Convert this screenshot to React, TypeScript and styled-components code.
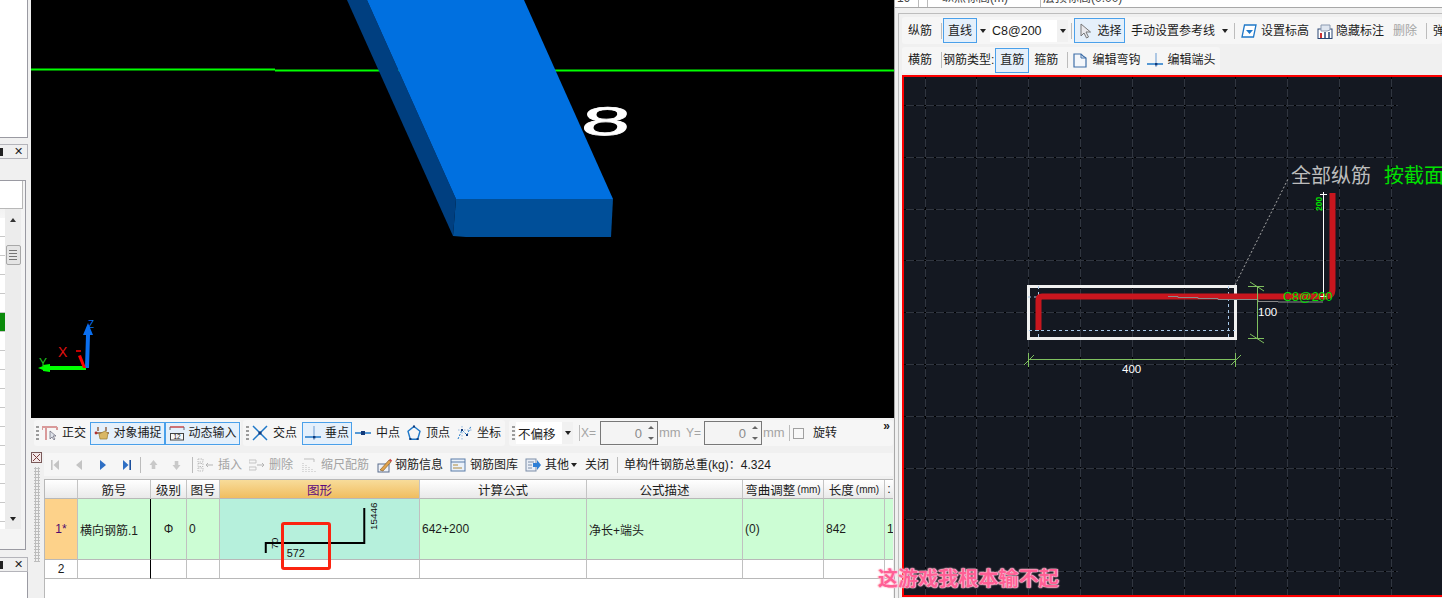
import React from 'react';
import styled, { createGlobalStyle } from 'styled-components';

const GlobalStyle = createGlobalStyle`
  html, body { margin: 0; padding: 0; background: #f0f0f0; }
  * { box-sizing: border-box; }
  body { font: 12px "Liberation Sans", "Noto Sans CJK SC", sans-serif; color: #1c1c1c; }
`;

const Ic = ({ w = 16, children }: { w?: number; children: React.ReactNode }) => (
  <svg width={w} height={16} viewBox={`0 0 ${w} 16`} style={{ flex: 'none', display: 'block' }}>
    {children}
  </svg>
);

const OrthoIcon = () => (
  <Ic>
    <path d="M0 2h15M4 2v13M0 2v3M15 2v3" stroke="#d99a9a" strokeWidth="2" fill="none" />
    <path d="M8 6l0 8 2-2 2 3 1-1-2-3 3 0z" fill="#dfe3ea" stroke="#667" strokeWidth=".7" />
  </Ic>
);
const SnapIcon = () => (
  <Ic>
    <path d="M1 8h14M4 2v4M12 2v4" stroke="#8c5a3c" strokeWidth="1.4" />
    <path d="M5 9l6-3 3 2-1 6H6z" fill="#d9b765" stroke="#9a7b30" strokeWidth=".7" />
    <circle cx="2" cy="8" r="1.4" fill="#b03030" />
  </Ic>
);
const DynIcon = () => (
  <Ic>
    <path d="M1 2h14" stroke="#c43a3a" strokeWidth="1.4" />
    <path d="M1 2v3M15 2v3" stroke="#667" />
    <rect x="1.5" y="8.5" width="13" height="6.5" fill="#f8f8f8" stroke="#444" />
    <text x="8" y="14.3" fontSize="6.5" textAnchor="middle" fontFamily="Liberation Sans" fill="#222">12</text>
  </Ic>
);
const CrossIcon = () => (
  <Ic>
    <path d="M1 1l14 14M15 1L1 15" stroke="#1f78c8" strokeWidth="1.5" />
    <rect x="6.5" y="6.5" width="3" height="3" fill="#123a7a" />
  </Ic>
);
const PerpIcon = ({ w = 16 }: { w?: number }) => (
  <Ic w={w}>
    <path d={`M0 12h${w}`} stroke="#1f78c8" strokeWidth="1.5" />
    <path d={`M${w / 2 + 1} 1v14`} stroke="#7fa9d8" strokeWidth="1.2" />
    <rect x={w / 2} y="11" width="2.4" height="2.4" fill="#123a7a" />
  </Ic>
);
const MidIcon = () => (
  <Ic>
    <path d="M0 8h16" stroke="#1f78c8" strokeWidth="1.5" />
    <rect x="6" y="6" width="4" height="4" fill="#123a7a" />
  </Ic>
);
const VertexIcon = () => (
  <Ic w={14}>
    <path d="M7 1.5l6 4.8-2.3 8H3.3L1 6.3z" fill="none" stroke="#1f78c8" strokeWidth="1.4" />
    <rect x="6" y="0.5" width="2" height="2" fill="#123a7a" />
    <rect x="2.4" y="13" width="2" height="2" fill="#123a7a" />
    <rect x="9.6" y="13" width="2" height="2" fill="#123a7a" />
  </Ic>
);
const CoordIcon = () => (
  <Ic>
    <path d="M1 14l4-9 5 5 4-9" fill="none" stroke="#1f78c8" strokeDasharray="2 1.4" />
    <path d="M1 5h14M5 1v14" stroke="#7fa9d8" strokeDasharray="1.5 1.5" strokeWidth=".8" />
    <rect x="4" y="4" width="2" height="2" fill="#123a7a" />
    <rect x="9" y="9" width="2" height="2" fill="#123a7a" />
  </Ic>
);
const FirstIcon = ({ c }: { c: string }) => (
  <Ic w={10}>
    <path d="M1 3h1.6v10H1z" fill={c} />
    <path d="M9 3v10L3.5 8z" fill={c} />
  </Ic>
);
const PrevIcon = ({ c }: { c: string }) => (
  <Ic w={8}>
    <path d="M7 3v10L1 8z" fill={c} />
  </Ic>
);
const NextIcon = ({ c }: { c: string }) => (
  <Ic w={8}>
    <path d="M1 3v10l6-5z" fill={c} />
  </Ic>
);
const LastIcon = ({ c }: { c: string }) => (
  <Ic w={10}>
    <path d="M1 3v10l5.5-5z" fill={c} />
    <path d="M7.4 3H9v10H7.4z" fill="#1b4f9c" />
  </Ic>
);
const UpIcon = () => (
  <Ic w={9}>
    <path d="M4.5 3L8.5 8H6.3v4H2.7V8H.5z" fill="#c9c9c9" />
  </Ic>
);
const DownIcon = () => (
  <Ic w={9}>
    <path d="M4.5 13L8.5 8H6.3V4H2.7v4H.5z" fill="#c9c9c9" />
  </Ic>
);
const InsertIcon = () => (
  <Ic>
    <path d="M1 2h5v3H1zM1 6.500h5v3H1zM1 11h5v3H1z" fill="none" stroke="#bdbdbd" strokeDasharray="1.5 1" />
    <path d="M16 8H9M11 6L9 8l2 2" fill="none" stroke="#b5b5b5" />
  </Ic>
);
const RemoveIcon = () => (
  <Ic>
    <path d="M0 3h7v3H0zM0 10h7v3H0z" fill="none" stroke="#c5c5c5" />
    <path d="M8 8h7M13 6l2 2-2 2" fill="none" stroke="#b5b5b5" />
  </Ic>
);
const ScaleIcon = () => (
  <Ic w={14}>
    <path d="M1 15V5M4 15V7M7 15V9M10 15v-4M13 15v-2" stroke="#bdbdbd" strokeDasharray="1 1" />
    <path d="M2 2h10v3" fill="none" stroke="#bdbdbd" />
  </Ic>
);
const InfoIcon = () => (
  <Ic>
    <rect x="1" y="7" width="11" height="8" fill="#eef2f8" stroke="#5a6d8c" />
    <path d="M3 13L12 3l2 2-8 9z" fill="#e0a24c" stroke="#7a5520" strokeWidth=".6" />
    <path d="M12 3l1.200-1.200 2 2L14 5z" fill="#c44" />
  </Ic>
);
const LibIcon = () => (
  <Ic>
    <rect x="1" y="2" width="14" height="12" fill="#eaf1fa" stroke="#5a7ca8" />
    <path d="M1 5h14" stroke="#5a7ca8" />
    <path d="M3 8h5M3 11h9" stroke="#b08a3c" />
  </Ic>
);
const OtherIcon = () => (
  <Ic>
    <rect x="1" y="2" width="10" height="12" fill="#e9eef6" stroke="#7d8ea8" />
    <path d="M3 5h6M3 8h4M3 11h4" stroke="#7d8ea8" />
    <path d="M8 6h4V3l4 5-4 5v-3H8z" fill="#2f7fd6" />
  </Ic>
);
const ArrowCursor = () => (
  <Ic>
    <path d="M3 1v12l3-3 2.500 5 2-1L8 9h4.500z" fill="#e8e8ec" stroke="#777" />
  </Ic>
);
const ElevIcon = () => (
  <Ic>
    <path d="M3.500 2H15l-2.500 12H1z" fill="#fff" stroke="#1f78c8" strokeWidth="1.3" />
    <path d="M5 7h7L8.500 11z" fill="#1f78c8" />
  </Ic>
);
const HideIcon = () => (
  <Ic>
    <rect x="1" y="6" width="14" height="9.500" fill="#fff" stroke="#2a4674" />
    <path d="M4 2h9v5l-3 1H4z" fill="#dfe6f0" stroke="#8a99b0" />
    <path d="M4 10v5" stroke="#c33" strokeWidth="2" />
    <path d="M8 9v6M12 9v6" stroke="#2a4674" strokeWidth="1.500" />
  </Ic>
);
const HookIcon = () => (
  <Ic w={14}>
    <path d="M1 2h7l2 2 3 2v9H1z" fill="#f4f7fb" stroke="#3f6fa8" strokeWidth="1.200" />
    <path d="M8 2v4h5" fill="none" stroke="#3f6fa8" />
  </Ic>
);

const Page = styled.div`
  position: relative;
  display: flex;
  width: 1442px;
  height: 598px;
  overflow: hidden;
  background: #f0f0f0;
`;

/* left dock strip */
const LeftDock = styled.div`
  flex: none;
  width: 31px;
  display: flex;
  flex-direction: column;
`;
const DockPane = styled.div<{ $h: number }>`
  flex: none;
  width: 28px;
  height: ${p => p.$h}px;
  background: #fff;
  border-right: 1px solid #9a9aa2;
  border-bottom: 1px solid #9a9aa2;
`;
const DockTitle = styled.div<{ $mt: number }>`
  flex: none;
  width: 28px;
  height: 15px;
  margin-top: ${p => p.$mt}px;
  border: 1px solid #b4b4ba;
  border-left: 0;
  display: flex;
  align-items: center;
  justify-content: space-between;
  padding-right: 4px;
  font-size: 11px;
`;
const PinStub = styled.span`
  width: 3px;
  height: 8px;
  background: #222;
`;
const ListFrame = styled.div`
  flex: none;
  width: 26px;
  height: 370px;
  margin-top: 21px;
  border-top: 1px solid #9a9aa2;
  border-right: 1px solid #9a9aa2;
  border-bottom: 1px solid #9a9aa2;
  padding-right: 2px;
  padding-bottom: 5px;
  background: #f4f4f4;
  display: flex;
  flex-direction: column;
`;
const ListHead = styled.div`
  flex: none;
  height: 28px;
  background: #fff;
  border-bottom: 1px solid #b8b8b8;
  border-right: 1px solid #b8b8b8;
`;
const ListBody = styled.div`
  display: flex;
  flex: 1;
  min-height: 0;
`;
const ListRows = styled.div`
  flex: none;
  width: 5px;
  height: 320px;
  background: linear-gradient(#f2f2f2, #fff 30px);
  padding-top: 9px;
`;
const ListRow = styled.div<{ $on?: boolean }>`
  height: 19px;
  border-bottom: 1px solid #c8c8c8;
  background: ${p => (p.$on ? '#0a8a0a' : '#fff')};
`;
const ScrollBar = styled.div`
  width: 16px;
  height: 320px;
  background: #ececec;
  display: flex;
  flex-direction: column;
  align-items: center;
  padding-top: 9px;
`;
const Caret = styled.span<{ $down?: boolean }>`
  flex: none;
  width: 0;
  height: 0;
  border-left: 3.5px solid transparent;
  border-right: 3.5px solid transparent;
  ${p => (p.$down ? 'border-top: 4px solid #222;' : 'border-bottom: 4px solid #333;')}
`;
const Thumb = styled.div`
  width: 15px;
  height: 20px;
  margin-top: 23px;
  margin-bottom: auto;
  border: 1px solid #a8a8a8;
  border-radius: 2px;
  background: repeating-linear-gradient(#777 0 1px, #e8e8e8 1px 3px) center / 8px 10px no-repeat, #e4e4e4;
`;
const BottomCaret = styled.div`
  display: flex;
  margin-bottom: 8px;
`;

/* centre */
const Centre = styled.div`
  flex: none;
  width: 863px;
  display: flex;
  flex-direction: column;
`;
const Viewport = styled.svg`
  flex: none;
  display: block;
  width: 863px;
  height: 418px;
  background: #000;
`;
const ToolRow = styled.div`
  flex: none;
  height: 34px;
  padding-top: 2px;
  display: flex;
  align-items: flex-start;
`;
const Strip = styled.div<{ $w: number; $ml: number }>`
  flex: none;
  width: ${p => p.$w}px;
  margin-left: ${p => p.$ml}px;
  height: 26px;
  background: #f6f6f6;
  border-radius: 3px;
  display: flex;
  align-items: center;
  white-space: nowrap;
`;
const Grip = styled.span<{ $ml: number }>`
  flex: none;
  width: 3px;
  height: 14px;
  margin-left: ${p => p.$ml}px;
  background: repeating-linear-gradient(#9b9b9b 0 2px, transparent 2px 4px);
`;
const Item = styled.div<{ $ml?: number; $gap?: number; $off?: boolean }>`
  flex: none;
  display: flex;
  align-items: center;
  gap: ${p => p.$gap ?? 5}px;
  margin-left: ${p => p.$ml ?? 0}px;
  color: ${p => (p.$off ? '#a4a4a4' : '#1c1c1c')};
  line-height: 16px;
`;
const MmLabel = styled(Item)`
  width: 22px;
  font-size: 13px;
`;
const ActiveBtn = styled.div<{ $w: number; $h?: number; $ml?: number }>`
  flex: none;
  width: ${p => p.$w}px;
  height: ${p => p.$h ?? 23}px;
  margin-left: ${p => p.$ml ?? 0}px;
  border: 1px solid #4aa0ea;
  background: #e5f0fb;
  display: flex;
  align-items: center;
  justify-content: center;
  gap: 4px;
  line-height: 16px;
`;
const Sep = styled.span<{ $ml: number }>`
  flex: none;
  width: 1px;
  height: 16px;
  margin-left: ${p => p.$ml}px;
  background: #bcbcbc;
`;
const Combo = styled.div<{ $w: number; $ml: number }>`
  flex: none;
  width: ${p => p.$w}px;
  height: 22px;
  margin-left: ${p => p.$ml}px;
  background: #fff;
  display: flex;
  align-items: center;
  padding-left: 2px;
  position: relative;
  font-size: 12.5px;
`;
const ComboBtn = styled.span`
  margin-left: auto;
  align-self: stretch;
  width: 11px;
  background: #f1f1f1;
  display: flex;
  align-items: center;
  justify-content: center;
`;
const Spin = styled.div<{ $ml: number }>`
  flex: none;
  width: 58px;
  height: 24px;
  margin-left: ${p => p.$ml}px;
  border: 1px solid #787878;
  background: #f4f4f4;
  display: flex;
  align-items: center;
  justify-content: flex-end;
  gap: 6px;
  padding-right: 3px;
  color: #8a8a8a;
  font-size: 13px;
`;
const SpinArrows = styled.span`
  display: flex;
  flex-direction: column;
  gap: 8px;
`;
const SmallCaret = styled.span<{ $down?: boolean }>`
  display: block;
  width: 0;
  height: 0;
  border-left: 3px solid transparent;
  border-right: 3px solid transparent;
  ${p => (p.$down ? 'border-top: 3px solid #666;' : 'border-bottom: 3px solid #666;')}
`;
const Check = styled.span<{ $ml: number }>`
  flex: none;
  width: 11px;
  height: 11px;
  margin-left: ${p => p.$ml}px;
  border: 1px solid #a0a0a0;
  background: #f8f8f8;
`;
const More = styled.span`
  margin-left: auto;
  margin-right: 3px;
  align-self: flex-start;
  font-size: 12px;
  line-height: 12px;
  font-weight: 700;
`;

const LowerArea = styled.div`
  flex: 1;
  min-height: 0;
  display: flex;
`;
const Handle = styled.div`
  flex: none;
  width: 13px;
  display: flex;
  flex-direction: column;
  align-items: flex-start;
`;
const CloseBox = styled.svg`
  display: block;
`;
const DotGrip = styled.div`
  margin: 2px 0 0 3px;
  width: 6px;
  height: 95px;
  background-image: radial-gradient(#bdbdbd 1px, transparent 1.200px);
  background-size: 3px 3px;
`;
const LowerMain = styled.div`
  flex: none;
  width: 849px;
  display: flex;
  flex-direction: column;
  position: relative;
`;
const NavBar = styled.div`
  flex: none;
  height: 23px;
  margin-top: 1px;
  background: #f6f6f6;
  display: flex;
  align-items: center;
  white-space: nowrap;
`;
const TableArea = styled.div`
  flex: 1;
  margin-top: 3px;
  background: #fff;
  border-top: 1px solid #b8b8b8;
  border-left: 1px solid #b8b8b8;
  overflow: hidden;
`;
const SheetGrid = styled.div`
  display: grid;
  grid-template-columns: 33px 73px 36px 33px 200px 167px 156px 81px 61px 9px;
  grid-template-rows: 19px 61px 19px;
`;
const HeadCell = styled.div<{ $on?: boolean }>`
  display: flex;
  align-items: center;
  justify-content: center;
  white-space: nowrap;
  overflow: hidden;
  font-size: 12.5px;
  border-right: 1px solid #c4c4c4;
  border-bottom: 1px solid #b8b8b8;
  background: ${p =>
    p.$on ? 'linear-gradient(#f8dc9a, #f0bd60)' : 'linear-gradient(#fff, #e9e9e9)'};
  color: ${p => (p.$on ? '#5c0a7e' : '#1c1c1c')};
`;
const Unit = styled.span`
  font-size: 10px;
  margin-left: 2px;
`;
const Cell = styled.div<{ $bg?: string; $center?: boolean; $mark?: boolean; $purple?: boolean; $flush?: boolean }>`
  display: flex;
  align-items: center;
  justify-content: ${p => (p.$center ? 'center' : 'flex-start')};
  padding-left: ${p => (p.$center || p.$flush ? 0 : 2)}px;
  white-space: nowrap;
  overflow: hidden;
  border-right: ${p => (p.$mark ? '1px solid #000' : '1px solid #c0c0c0')};
  border-bottom: 1px solid #b8b8b8;
  background: ${p => p.$bg ?? '#fff'};
  color: ${p => (p.$purple ? '#4d0a6e' : '#1c1c1c')};
`;
const ShapeSvg = styled.svg`
  display: block;
`;
const Callout = styled.div`
  position: absolute;
  left: 237px;
  top: 70px;
  width: 50px;
  height: 48px;
  border: 3px solid #fb2410;
  border-radius: 3px;
`;

/* right panel */
const RightCol = styled.div`
  flex: none;
  width: 548px;
  border-left: 1px solid #a8a8a8;
  display: flex;
  flex-direction: column;
`;
const TopSheet = styled.div`
  flex: none;
  height: 8px;
  background: #fff;
  border-bottom: 1px solid #a8a8a8;
  display: grid;
  grid-template-columns: 24px 9px 113px 1fr;
  overflow: hidden;
  font-size: 12px;
  color: #444;
`;
const TopCell = styled.div<{ $last?: boolean }>`
  height: 7px;
  border-right: ${p => (p.$last ? '0' : '1px solid #bbb')};
  white-space: nowrap;
  line-height: 14px;
  padding-left: 2px;
  & > span {
    display: block;
    margin-top: -9px;
  }
`;
const Panel = styled.div`
  flex: 1;
  min-height: 0;
  margin: 5px 0 0 3px;
  border-top: 1px solid #bdbdbd;
  border-left: 1px solid #bdbdbd;
  padding: 3px 0 0 3px;
  display: flex;
  flex-direction: column;
`;
const DrawBar = styled.div<{ $w?: number }>`
  flex: none;
  height: 27px;
  width: ${p => (p.$w ? `${p.$w}px` : 'auto')};
  background: #f6f6f6;
  border-radius: 3px;
  display: flex;
  align-items: center;
  white-space: nowrap;
  overflow: hidden;
`;
const DrawBarLow = styled(DrawBar)`
  height: 26px;
  margin-top: 3px;
`;
const Canvas = styled.div`
  flex: none;
  height: 522px;
  margin-top: 2px;
  border: 2px solid #fe0000;
  border-right: 0;
  background: #141821;
  overflow: hidden;
`;
const CanvasSvg = styled.svg`
  display: block;
  width: 538px;
  height: 518px;
`;
const Watermark = styled.div`
  position: absolute;
  left: 878px;
  top: 565px;
  font: 700 20px/26px "Noto Sans CJK SC", sans-serif;
  letter-spacing: 0.1px;
  color: #ff5f95;
  white-space: nowrap;
  text-shadow: 0 0 1px #ffd9e6, 0 0 2px #ffc2d6, 1px 0 1px #ffb0cb, -1px 0 1px #ffb0cb;
`;

const GRID_X = [925, 976, 1028, 1080, 1132, 1184, 1235, 1287, 1339, 1391];
const GRID_Y = [104, 156, 208, 259, 311, 363, 415, 467, 518, 570];
const SOFT_ROWS = [1, 2, 3, 4, 5, 6, 7, 8, 9, 10, 11, 12, 13, 14, 15, 16];

const BlueprintGrid = () => (
  <g>
    {GRID_X.map(x => (
      <g key={x}>
        <line x1={x + 0.5} x2={x + 0.5} y1={76} y2={596} stroke="#30353f" />
        <line x1={x + 0.5} x2={x + 0.5} y1={76} y2={596} stroke="#000" strokeDasharray="2 8" />
      </g>
    ))}
    {GRID_Y.map(y => (
      <g key={y}>
        <line x1={904} x2={1398} y1={y + 0.5} y2={y + 0.5} stroke="#30353f" />
        <line x1={904} x2={1398} y1={y + 0.5} y2={y + 0.5} stroke="#000" strokeDasharray="2 8" />
      </g>
    ))}
  </g>
);

const App = () => (
  <Page>
    <GlobalStyle />
    <LeftDock>
      <DockPane $h={138} />
      <DockTitle $mt={6}>
        <PinStub />
        <span>✕</span>
      </DockTitle>
      <ListFrame>
        <ListHead />
        <ListBody>
          <ListRows>
            {SOFT_ROWS.map(n => (
              <ListRow key={n} $on={n === 6} />
            ))}
          </ListRows>
          <ScrollBar>
            <Caret />
            <Thumb />
            <BottomCaret>
              <Caret $down />
            </BottomCaret>
          </ScrollBar>
        </ListBody>
      </ListFrame>
      <DockTitle $mt={7}>
        <PinStub />
        <span>✕</span>
      </DockTitle>
      <DockPane $h={40} />
    </LeftDock>

    <Centre>
      <Viewport viewBox="31 0 863 418">
        <path d="M31 69.500H275M275 70.500H894" stroke="#00ff00" strokeWidth="2" />
        <path d="M347 0h20l89 199-3 37z" fill="#003f80" />
        <path d="M456 199h157l-2 38H466l-13-1z" fill="#004f99" />
        <path d="M367 0h157l89 199H456z" fill="#0070e0" />
        <text
          transform="matrix(2.2 0 -0.12 1 580 135)"
          fontFamily="Liberation Sans"
          fontSize="40"
          fill="#fff"
          stroke="#fff"
          strokeWidth=".7"
        >
          8
        </text>
        <path d="M86 366H50v-2l-7 1v1l-5 2 5 2v1l7 1v-2h36z" fill="#00ff00" />
        <path d="M85 368l1-33h-3l5-12 5 12h-3l-1 33z" fill="#0a6ff0" />
        <path d="M86 368h-3l-5-12 3-1z" fill="#ff0000" />
        <path d="M76 351h5" stroke="#ff0000" strokeWidth="1.500" />
        <text x="58" y="357" fontSize="14" fill="#e01010" fontFamily="Liberation Sans">X</text>
        <text x="39" y="367" fontSize="12" fill="#20c020" fontFamily="Liberation Sans">Y</text>
        <text x="88" y="328" fontSize="10" fill="#0a6ff0" fontFamily="Liberation Sans">Z</text>
      </Viewport>

      <ToolRow>
        <Strip $w={207} $ml={3}>
          <Grip $ml={2} />
          <Item $ml={3} $gap={4}>
            <OrthoIcon />
            正交
          </Item>
          <ActiveBtn $w={75} $ml={4}>
            <SnapIcon />
            对象捕捉
          </ActiveBtn>
          <ActiveBtn $w={75}>
            <DynIcon />
            动态输入
          </ActiveBtn>
        </Strip>
        <Strip $w={262} $ml={2}>
          <Grip $ml={3} />
          <Item $ml={3}>
            <CrossIcon />
            交点
          </Item>
          <ActiveBtn $w={50} $ml={5}>
            <PerpIcon />
            垂点
          </ActiveBtn>
          <Item $ml={3}>
            <MidIcon />
            中点
          </Item>
          <Item $ml={7} $gap={5}>
            <VertexIcon />
            顶点
          </Item>
          <Item $ml={7} $gap={4}>
            <CoordIcon />
            坐标
          </Item>
        </Strip>
        <Strip $w={384} $ml={4}>
          <Grip $ml={3} />
          <Combo $w={57} $ml={1}>
            不偏移
            <ComboBtn>
              <Caret $down />
            </ComboBtn>
          </Combo>
          <Sep $ml={6} />
          <Item $ml={1} $off>X=</Item>
          <Spin $ml={4}>
            0
            <SpinArrows>
              <SmallCaret />
              <SmallCaret $down />
            </SpinArrows>
          </Spin>
          <MmLabel $ml={1} $off>mm</MmLabel>
          <Item $ml={5} $off>Y=</Item>
          <Spin $ml={3}>
            0
            <SpinArrows>
              <SmallCaret />
              <SmallCaret $down />
            </SpinArrows>
          </Spin>
          <MmLabel $ml={1} $off>mm</MmLabel>
          <Sep $ml={4} />
          <Check $ml={3} />
          <Item $ml={9}>旋转</Item>
          <More>»</More>
        </Strip>
      </ToolRow>

      <LowerArea>
        <Handle>
          <CloseBox width="11" height="13" viewBox="0 0 11 13">
            <rect x=".5" y=".5" width="10" height="10" fill="#f4e8e8" stroke="#7a5a5a" />
            <path d="M2 2l7 7M9 2L2 9" stroke="#7a3a3a" />
          </CloseBox>
          <DotGrip />
        </Handle>
        <LowerMain>
          <NavBar>
            <Item $ml={6}>
              <FirstIcon c="#c4c4c4" />
            </Item>
            <Item $ml={15}>
              <PrevIcon c="#c4c4c4" />
            </Item>
            <Item $ml={16}>
              <NextIcon c="#2f6fc4" />
            </Item>
            <Item $ml={15}>
              <LastIcon c="#2f6fc4" />
            </Item>
            <Sep $ml={8} />
            <Item $ml={8}>
              <UpIcon />
            </Item>
            <Item $ml={14}>
              <DownIcon />
            </Item>
            <Sep $ml={11} />
            <Item $ml={4} $off>
              <InsertIcon />
              插入
            </Item>
            <Item $ml={7} $off $gap={4}>
              <RemoveIcon />
              删除
            </Item>
            <Item $ml={9} $off>
              <ScaleIcon />
              缩尺配筋
            </Item>
            <Item $ml={8} $gap={2}>
              <InfoIcon />
              钢筋信息
            </Item>
            <Item $ml={7} $gap={4}>
              <LibIcon />
              钢筋图库
            </Item>
            <Item $ml={7} $gap={4}>
              <OtherIcon />
              其他
            </Item>
            <Item $ml={2}>
              <Caret $down />
            </Item>
            <Item $ml={8}>关闭</Item>
            <Sep $ml={8} />
            <Item $ml={6}>单构件钢筋总重(kg)：4.324</Item>
          </NavBar>
          <TableArea>
            <SheetGrid>
              <HeadCell />
              <HeadCell>筋号</HeadCell>
              <HeadCell>级别</HeadCell>
              <HeadCell>图号</HeadCell>
              <HeadCell $on>图形</HeadCell>
              <HeadCell>计算公式</HeadCell>
              <HeadCell>公式描述</HeadCell>
              <HeadCell>
                弯曲调整<Unit>(mm)</Unit>
              </HeadCell>
              <HeadCell>
                长度<Unit>(mm)</Unit>
              </HeadCell>
              <HeadCell>:</HeadCell>

              <Cell $bg="#fdd28a" $center $purple>1*</Cell>
              <Cell $bg="#ccfdd4" $mark>横向钢筋.1</Cell>
              <Cell $bg="#ccfdd4" $center>Φ</Cell>
              <Cell $bg="#ccfdd4">0</Cell>
              <Cell $bg="#b6f0dc" $flush>
                <ShapeSvg width="200" height="60" viewBox="220 499 200 60">
                  <path d="M266 553v-10h99v-35" fill="none" stroke="#000" strokeWidth="2" />
                  <text x="287" y="557" fontSize="11" fontFamily="Liberation Sans" fill="#111">572</text>
                  <text
                    transform="translate(378 530) rotate(-90)"
                    fontSize="10"
                    fontFamily="Liberation Sans"
                    fill="#111"
                  >
                    15446
                  </text>
                  <text
                    transform="translate(278 549) rotate(-90)"
                    fontSize="10"
                    fontFamily="Liberation Sans"
                    fill="#111"
                  >
                    70
                  </text>
                </ShapeSvg>
              </Cell>
              <Cell $bg="#ccfdd4">642+200</Cell>
              <Cell $bg="#ccfdd4">净长+端头</Cell>
              <Cell $bg="#ccfdd4">(0)</Cell>
              <Cell $bg="#ccfdd4">842</Cell>
              <Cell $bg="#ccfdd4">1</Cell>

              <Cell $center>2</Cell>
              <Cell $mark />
              <Cell />
              <Cell />
              <Cell />
              <Cell />
              <Cell />
              <Cell />
              <Cell />
              <Cell />
            </SheetGrid>
          </TableArea>
          <Callout />
        </LowerMain>
      </LowerArea>
    </Centre>

    <RightCol>
      <TopSheet>
        <TopCell><span>19</span></TopCell>
        <TopCell />
        <TopCell><span>　纵点标高(m)</span></TopCell>
        <TopCell $last><span>层顶标高(0.00)</span></TopCell>
      </TopSheet>
      <Panel>
        <DrawBar>
          <Item $ml={6}>纵筋</Item>
          <Sep $ml={9} />
          <ActiveBtn $w={34} $ml={1} $h={25}>直线</ActiveBtn>
          <Item $ml={3}>
            <Caret $down />
          </Item>
          <Combo $w={78} $ml={4}>
            C8@200
            <ComboBtn>
              <Caret $down />
            </ComboBtn>
          </Combo>
          <Sep $ml={3} />
          <ActiveBtn $w={51} $ml={2} $h={25}>
            <ArrowCursor />
            选择
          </ActiveBtn>
          <Item $ml={6}>手动设置参考线</Item>
          <Item $ml={7}>
            <Caret $down />
          </Item>
          <Sep $ml={6} />
          <Item $ml={6} $gap={4}>
            <ElevIcon />
            设置标高
          </Item>
          <Item $ml={8} $gap={3}>
            <HideIcon />
            隐藏标注
          </Item>
          <Item $ml={9} $off>删除</Item>
          <Sep $ml={9} />
          <Item $ml={6}>弹</Item>
        </DrawBar>
        <DrawBarLow $w={318}>
          <Item $ml={6}>横筋</Item>
          <Sep $ml={9} />
          <Item $ml={1}>钢筋类型:</Item>
          <ActiveBtn $w={34} $ml={1} $h={25}>直筋</ActiveBtn>
          <Item $ml={5}>箍筋</Item>
          <Sep $ml={9} />
          <Item $ml={5}>
            <HookIcon />
            编辑弯钩
          </Item>
          <Item $ml={7} $gap={4}>
            <PerpIcon />
            编辑端头
          </Item>
        </DrawBarLow>
        <Canvas>
          <CanvasSvg viewBox="904 76 538 518">
            <BlueprintGrid />
            <rect x="1028.500" y="285.500" width="207" height="52" fill="none" stroke="#f0f0f0" strokeWidth="3" />
            <g stroke="#a8c8e8" strokeDasharray="3 3" fill="none">
              <path d="M1038.500 285v52M1228.500 285v52M1028 296h10M1029 329.500h206" />
            </g>
            <path
              d="M1038.500 329V299q0-3.500 3.500-3.500H1325q7.500 0 7.500-7.500V192"
              fill="none"
              stroke="#c8161e"
              strokeWidth="6"
            />
            <path
              d="M1168 295.500h10v1h20v1h20v1h40v2h20v.5h45"
              fill="none"
              stroke="#8a8a8a"
              strokeWidth="1"
            />
            <path d="M1235 284L1288 178" stroke="#a8a8a8" strokeDasharray="2 2" />
            <g stroke="#7fc05f" fill="none">
              <path d="M1257.500 285v52M1248 285.500h16M1248 337.500h16M1250 281l14 9M1250 333l14 9" />
              <path d="M1028.500 352v14M1235.500 352v14M1028 358.500h208M1024 364l10-10M1231 364l10-10" />
            </g>
            <path d="M1323.500 191v105M1320 193.500h7M1320 295.500h7" stroke="#fff" fill="none" />
            <text x="1291" y="182" fontSize="20" fill="#bcbcbc" fontFamily="Noto Sans CJK SC">全部纵筋</text>
            <text x="1384" y="182" fontSize="20" fill="#00e000" fontFamily="Noto Sans CJK SC">按截面</text>
            <text x="1258" y="315" fontSize="11.500" fill="#fff" fontFamily="Liberation Sans">100</text>
            <text x="1122" y="372" fontSize="11.500" fill="#fff" fontFamily="Liberation Sans">400</text>
            <text x="1283" y="300" fontSize="12.500" fill="#00e000" fontFamily="Liberation Sans">C8@200</text>
            <text
              transform="translate(1321.500 210) rotate(-90)"
              fontSize="8.500"
              fontWeight="700"
              fill="#00e000"
              fontFamily="Liberation Sans"
            >
              200
            </text>
          </CanvasSvg>
        </Canvas>
      </Panel>
    </RightCol>

    <Watermark>这游戏我根本输不起</Watermark>
  </Page>
);

export default App;
